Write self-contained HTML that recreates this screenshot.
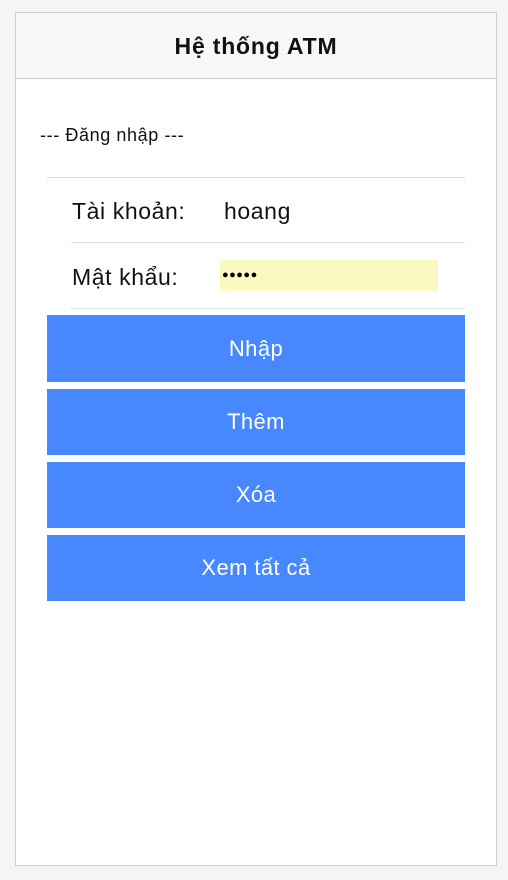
<!DOCTYPE html>
<html><head><meta charset="utf-8"><style>
body{margin:0;width:508px;height:880px;background:#f5f5f5;font-family:"Liberation Sans",sans-serif;position:relative;overflow:hidden}
.card{position:absolute;left:15px;top:12px;width:480px;height:852px;background:#fff;border:1px solid #d0d0d0}
.hd{height:65px;background:#f7f7f7;border-bottom:1px solid #c8c8c8;text-align:center;line-height:66px;font-size:23px;letter-spacing:0.8px;font-weight:bold;color:#111}
.abs{position:absolute}
.line{position:absolute;height:1px;background:#ddd}
.lbl{position:absolute;font-size:23px;letter-spacing:0.6px;color:#111;line-height:26px}
.btn{position:absolute;left:31px;width:418px;background:#4788fe;color:#fff;font-size:22px;letter-spacing:0.4px;text-align:center}
</style></head><body>
<div class="card">
<div class="hd">Hệ thống ATM</div>
<div class="abs" style="left:24px;top:112px;font-size:18px;letter-spacing:0.6px;color:#111">--- Đăng nhập ---</div>
<div class="line" style="left:31px;top:164px;width:418px"></div>
<div class="lbl" style="left:56px;top:185px">Tài khoản:</div>
<div class="lbl" style="left:208px;top:185px">hoang</div>
<div class="line" style="left:55px;top:229px;width:394px"></div>
<div class="lbl" style="left:56px;top:251px">Mật khẩu:</div>
<div class="abs" style="left:204px;top:247px;width:216px;height:31px;background:#fafac0;font-size:11px;line-height:31px;color:#000;letter-spacing:0.5px;padding-left:2px">●●●●●</div>
<div class="line" style="left:55px;top:295px;width:394px"></div>
<div class="btn" style="top:302px;height:67px;line-height:67px">Nhập</div>
<div class="btn" style="top:376px;height:66px;line-height:66px">Thêm</div>
<div class="btn" style="top:449px;height:66px;line-height:66px">Xóa</div>
<div class="btn" style="top:522px;height:66px;line-height:66px">Xem tất cả</div>
</div>
</body></html>
